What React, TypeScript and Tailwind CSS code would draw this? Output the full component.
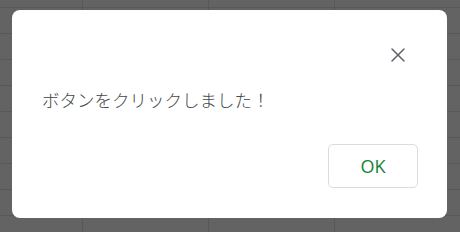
import { X } from "lucide-react";

const cols = [83, 126, 126, 126];
const rows = [8, 26, 26, 26, 26, 26, 26, 26, 26, 26];

export default function App() {
  return (
    <div className="relative w-[460px] h-[232px] overflow-hidden bg-[#636363]">
      {/* dimmed sheet behind the dialog */}
      <div className="flex flex-col">
        {rows.map((h, r) => (
          <div key={r} className="flex" style={{ height: h }}>
            {cols.map((w, c) => (
              <div
                key={c}
                className="shrink-0 border-r border-b border-[#585858]"
                style={{ width: w }}
              />
            ))}
          </div>
        ))}
      </div>

      <div className="absolute left-[12px] top-[10px] w-[435px] h-[208px] bg-white rounded-[8px] flex flex-col pl-[30px] pr-[29px] pt-[25px] font-['Noto_Sans_CJK_JP',sans-serif]">
        <div className="flex justify-end">
          <button className="w-10 h-10 flex items-center justify-center text-[#5f6368]">
            <X className="w-[24px] h-[24px]" strokeWidth={1.5} />
          </button>
        </div>
        <p className="mt-[13px] text-[17.5px] leading-[24px] font-light text-[#444746]">
          ボタンをクリックしました！
        </p>
        <div className="flex justify-end mt-[32px]">
          <button className="w-[90px] h-[44px] border border-[#dadce0] rounded-[5px] text-[18px] font-medium text-[#188038] font-['Open_Sans',sans-serif]">
            OK
          </button>
        </div>
      </div>
    </div>
  );
}
